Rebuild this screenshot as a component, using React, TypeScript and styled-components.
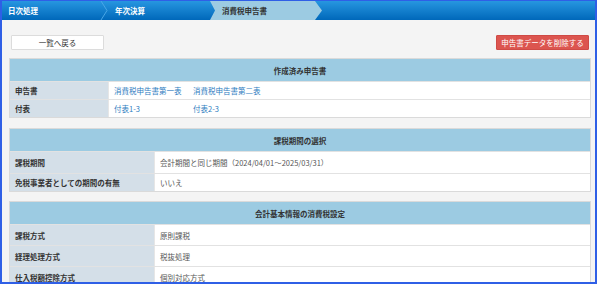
import * as React from 'react';
import styled, { createGlobalStyle } from 'styled-components';

const GlobalStyle = createGlobalStyle`
  html, body { margin: 0; padding: 0; }
  body {
    font-family: "Noto Sans CJK JP", "Noto Sans", sans-serif;
    font-size: 7.5px;
    color: #333;
  }
`;

/**
 * Frame & breadcrumb
 */
const Frame = styled.div`
  box-sizing: border-box;
  width: 597px;
  height: 284px;
  border: 2px solid #2f5fe6;
  border-top-width: 1px;
  background: #f4f4f4;
  overflow: hidden;
`;

const Crumbs = styled.nav`
  display: flex;
  height: 19px;
  background: linear-gradient(#2796e0, #0068ba);
`;

const Crumb = styled.div<{ $active?: boolean; $width: number }>`
  position: relative;
  display: flex;
  align-items: center;
  flex: none;
  box-sizing: border-box;
  width: ${(p) => p.$width}px;
  padding-left: ${(p) => (p.$active ? 12 : 6)}px;
  color: ${(p) => (p.$active ? '#333' : '#fff')};
  font-weight: bold;
  background: ${(p) => (p.$active ? '#9ccbe2' : 'transparent')};
  clip-path: ${(p) =>
    p.$active
      ? 'polygon(0 0, calc(100% - 7px) 0, 100% 50%, calc(100% - 7px) 100%, 0 100%, 5px 50%)'
      : 'none'};
`;

const Chevron = styled.svg`
  position: absolute;
  right: 0;
  top: 0;
`;

/**
 * Buttons
 */
const Toolbar = styled.div`
  display: flex;
  justify-content: space-between;
  padding: 15px 6px 0 9px;
`;

const Button = styled.button<{ $danger?: boolean }>`
  box-sizing: border-box;
  width: 93px;
  height: 15px;
  padding: 0;
  font: inherit;
  line-height: 13px;
  border-radius: 1px;
  border: 1px solid ${(p) => (p.$danger ? '#cf4a45' : '#dcdcdc')};
  background: ${(p) => (p.$danger ? '#dc554f' : '#fff')};
  color: ${(p) => (p.$danger ? '#fff' : '#333')};
`;

/**
 * Panels
 */
const Content = styled.div`
  display: flex;
  flex-direction: column;
  padding: 0 4px 0 7px;
`;

const Panel = styled.section<{ $top: number }>`
  width: 582px;
  box-sizing: border-box;
  margin-top: ${(p) => p.$top}px;
  border: 1px solid #dadada;
  background: #fff;
`;

const PanelHeader = styled.h2`
  display: flex;
  align-items: center;
  justify-content: center;
  height: 22px;
  margin: 0;
  background: #9ccbe2;
  font-size: inherit;
  font-weight: bold;
  color: #333;
`;

const Row = styled.div<{ $labelWidth: number; $height: number }>`
  display: grid;
  grid-template-columns: ${(p) => p.$labelWidth}px 1fr;
  height: ${(p) => p.$height}px;
  border-top: 1px solid #e2e2e2;
`;

const Label = styled.div`
  display: flex;
  align-items: center;
  padding-left: 5px;
  background: #d4dfe8;
  border-right: 1px solid #e6e6e6;
  font-weight: bold;
  color: #333;
`;

const Value = styled.div`
  display: flex;
  align-items: center;
  padding-left: 5px;
  color: #555;
`;

const Link = styled.a`
  width: 79px;
  color: #2e7cc0;
  text-decoration: none;
  white-space: nowrap;
`;

type RowData = { label: string; value: React.ReactNode; height: number };

const Section: React.FC<{ title: string; labelWidth: number; top: number; rows: RowData[] }> = ({
  title,
  labelWidth,
  top,
  rows,
}) => (
  <Panel $top={top}>
    <PanelHeader>{title}</PanelHeader>
    {rows.map((r) => (
      <Row key={r.label} $labelWidth={labelWidth} $height={r.height}>
        <Label>{r.label}</Label>
        <Value>{r.value}</Value>
      </Row>
    ))}
  </Panel>
);

const Sep = () => (
  <Chevron width="9" height="19" viewBox="0 0 9 19">
    <path d="M1 0 L7 9.5 L1 19" fill="none" stroke="#4aa6e6" strokeWidth="1" />
  </Chevron>
);

export default function App() {
  return (
    <>
      <GlobalStyle />
      <Frame>
        <Crumbs>
          <Crumb $width={107}>
            日次処理
            <Sep />
          </Crumb>
          <Crumb $width={101}>年次決算</Crumb>
          <Crumb $active $width={112}>
            消費税申告書
          </Crumb>
        </Crumbs>
        <Toolbar>
          <Button>一覧へ戻る</Button>
          <Button $danger>申告書データを削除する</Button>
        </Toolbar>
        <Content>
          <Section
            title="作成済み申告書"
            labelWidth={99}
            top={8}
            rows={[
              {
                label: '申告書',
                height: 17,
                value: (
                  <>
                    <Link>消費税申告書第一表</Link>
                    <Link>消費税申告書第二表</Link>
                  </>
                ),
              },
              {
                label: '付表',
                height: 17,
                value: (
                  <>
                    <Link>付表1-3</Link>
                    <Link>付表2-3</Link>
                  </>
                ),
              },
            ]}
          />
          <Section
            title="課税期間の選択"
            labelWidth={145}
            top={10}
            rows={[
              { label: '課税期間', height: 21, value: '会計期間と同じ期間（2024/04/01～2025/03/31）' },
              { label: '免税事業者としての期間の有無', height: 17, value: 'いいえ' },
            ]}
          />
          <Section
            title="会計基本情報の消費税設定"
            labelWidth={145}
            top={9}
            rows={[
              { label: '課税方式', height: 20, value: '原則課税' },
              { label: '経理処理方式', height: 20, value: '税抜処理' },
              { label: '仕入税額控除方式', height: 20, value: '個別対応方式' },
            ]}
          />
        </Content>
      </Frame>
    </>
  );
}
